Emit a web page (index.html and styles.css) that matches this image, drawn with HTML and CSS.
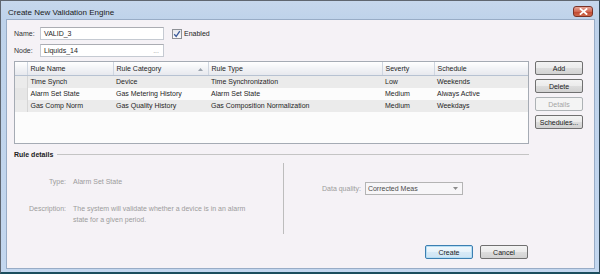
FILE: index.html
```html
<!DOCTYPE html>
<html>
<head>
	<title>Create New Validation Engine</title>
	<link rel="stylesheet" href="styles.css">
</head>
<body>
	<div class="window">
		<div class="titlebar">
			<span class="title">Create New Validation Engine</span>
			<button class="close-btn">
				<svg width="9" height="7" viewBox="0 0 9 7">
					<path d="M1.5 1 L7.5 6 M7.5 1 L1.5 6" stroke="#fff" stroke-width="1.8" stroke-linecap="square"/>
				</svg>
			</button>
		</div>

		<div class="client">
			<div class="field-row">
				<span class="field-label">Name:</span>
				<div class="textbox">VALID_3</div>
				<label class="check">
					<span class="checkbox">
						<svg width="8" height="8" viewBox="0 0 8 8">
							<path d="M1.2 4.2 L3.2 6.4 L6.8 1.2" fill="none" stroke="#3a5a9a" stroke-width="1.3"/>
						</svg>
					</span>
					Enabled
				</label>
			</div>
			<div class="field-row">
				<span class="field-label">Node:</span>
				<div class="textbox">Liquids_14<span class="browse">...</span></div>
			</div>

			<div class="rules">
				<div class="grid">
					<table>
						<colgroup>
							<col style="width:12px">
							<col style="width:86px">
							<col style="width:95px">
							<col style="width:174px">
							<col style="width:52px">
							<col style="width:94px">
						</colgroup>
						<tr>
							<th class="row-head"></th>
							<th>Rule Name</th>
							<th>Rule Category<span class="sort"><svg width="5" height="3" viewBox="0 0 5 3"><path d="M0 3 L2.5 0 L5 3 Z" fill="#9aa3ad"/></svg></span></th>
							<th>Rule Type</th>
							<th>Severty</th>
							<th>Schedule</th>
						</tr>
						<tr class="shade">
							<td class="row-head"></td>
							<td>Time Synch</td>
							<td>Device</td>
							<td>Time Synchronization</td>
							<td>Low</td>
							<td>Weekends</td>
						</tr>
						<tr>
							<td class="row-head"></td>
							<td>Alarm Set State</td>
							<td>Gas Metering History</td>
							<td>Alarm Set State</td>
							<td>Medium</td>
							<td>Always Active</td>
						</tr>
						<tr class="shade">
							<td class="row-head"></td>
							<td>Gas Comp Norm</td>
							<td>Gas Quality History</td>
							<td>Gas Composition Normalization</td>
							<td>Medium</td>
							<td>Weekdays</td>
						</tr>
					</table>
				</div>
				<div class="side-buttons">
					<button class="btn">Add</button>
					<button class="btn">Delete</button>
					<button class="btn" disabled>Details</button>
					<button class="btn">Schedules...</button>
				</div>
			</div>

			<div class="group-title"><span>Rule details</span></div>

			<div class="details">
				<div class="details-left">
					<div class="detail-row">
						<span class="detail-label">Type:</span>
						<span class="detail-value">Alarm Set State</span>
					</div>
					<div class="detail-row desc">
						<span class="detail-label">Description:</span>
						<span class="detail-value">The system will validate whether a device is in an alarm state for a given period.</span>
					</div>
				</div>
				<div class="details-right">
					<span class="detail-label">Data quality:</span>
					<div class="combo">Corrected Meas
						<svg width="5" height="3" viewBox="0 0 5 3"><path d="M0 0 L5 0 L2.5 3 Z" fill="#8c8c8c"/></svg>
					</div>
				</div>
			</div>

			<div class="footer">
				<button class="btn default">Create</button>
				<button class="btn">Cancel</button>
			</div>
		</div>
	</div>
</body>
</html>
```

FILE: styles.css
```css
body {
	margin: 0;
	font-family: "Liberation Sans", Arial, sans-serif;
	font-size: 7px;
	color: #1e1e1e;
}

.window {
	width: 600px;
	height: 274px;
	box-sizing: border-box;
	border-top: 1px solid #5f6670;
	border-left: 1px solid #5f6670;
	border-right: 1px solid #2e4454;
	border-bottom: 2px solid #1b4e5e;
	background: linear-gradient(#c6d7ec, #bed2ea 20px, #c3d7ef);
	padding: 0 4px 3px 5px;
	display: flex;
	flex-direction: column;
}

.titlebar {
	height: 18px;
	box-sizing: border-box;
	padding: 4px 2px 0 2px;
	display: flex;
	align-items: center;
	justify-content: space-between;
}

.title {
	font-size: 8px;
	color: #1a1a1a;
}

.close-btn {
	width: 20px;
	height: 11px;
	padding: 0;
	border: 1px solid #7a3328;
	border-radius: 3px;
	background: linear-gradient(#e6a597, #d26a55 50%, #bf4530 51%, #cf6a4c);
	display: flex;
	align-items: center;
	justify-content: center;
	margin-top: -2px;
}

.client {
	flex: 1;
	border: 1px solid #98acc6;
	background: #f5f2f6;
	padding: 7px 0 0 7px;
}

.field-row {
	display: flex;
	align-items: center;
	height: 13px;
	margin-bottom: 4px;
}

.field-label {
	width: 26px;
	color: #333;
}

.textbox {
	width: 124px;
	height: 13px;
	box-sizing: border-box;
	border: 1px solid #c5cad2;
	border-top-color: #abadb3;
	background: #fff;
	padding-left: 3px;
	line-height: 11px;
	display: flex;
	justify-content: space-between;
}

.browse {
	color: #9a9a9a;
	padding-right: 4px;
}

.check {
	display: flex;
	align-items: center;
	margin-left: 8px;
	color: #222;
}

.checkbox {
	width: 10px;
	height: 10px;
	box-sizing: border-box;
	border: 1px solid #8e9196;
	background: linear-gradient(#e6e8ec, #fafafa);
	display: flex;
	align-items: center;
	justify-content: center;
	margin-right: 2px;
}

.rules {
	display: flex;
	margin-top: 2px;
}

.grid {
	width: 515px;
	height: 83px;
	box-sizing: border-box;
	border: 1px solid #a5abb4;
	background: #fcfcfc;
	overflow: hidden;
}

table {
	border-collapse: collapse;
	table-layout: fixed;
	width: 513px;
}

th {
	height: 13px;
	padding: 0 3px;
	line-height: 12px;
	font-weight: normal;
	text-align: left;
	background: linear-gradient(#ffffff, #f2f3f6 50%, #e7e9ee);
	border-right: 1px solid #cfd6e0;
	border-bottom: 1px solid #b7c2d2;
	white-space: nowrap;
	overflow: hidden;
}

td {
	height: 12px;
	padding: 0 3px;
	line-height: 12px;
	white-space: nowrap;
	overflow: hidden;
}

tr.shade td {
	background: #ebebeb;
}

td.row-head {
	background: #e6e6e6;
	border-right: 1px solid #d6d6d6;
}

.sort {
	float: right;
	margin-right: 2px;
	line-height: 11px;
}

.side-buttons {
	display: flex;
	flex-direction: column;
	gap: 4px;
	margin-left: 6px;
	width: 48px;
}

.btn {
	height: 14px;
	padding: 0;
	border: 1px solid #707070;
	border-radius: 2px;
	background: linear-gradient(#f3f3f3, #ebebeb 50%, #dddddd 51%, #d2d2d2);
	font-family: "Liberation Sans", Arial, sans-serif;
	font-size: 7px;
	color: #1a1a1a;
}

.btn:disabled {
	color: #a4a4a4;
	border-color: #adb2b5;
	background: #f4f4f4;
}

.btn.default {
	border-color: #3c7fb1;
	box-shadow: inset 0 0 0 1px #b6def4;
	background: linear-gradient(#f2f8fc, #e6f2fa 50%, #d7eaf7 51%, #cfe4f3);
}

.group-title {
	width: 515px;
	height: 10px;
	margin-top: 5px;
	display: flex;
	align-items: center;
	font-weight: bold;
	color: #222;
}

.group-title::after {
	content: "";
	flex: 1;
	border-top: 1px solid #c4c4c4;
	margin-left: 4px;
}

.details {
	display: flex;
	margin-top: 4px;
	height: 71px;
	color: #9c9c9c;
}

.details-left {
	width: 269px;
	border-right: 1px solid #bdbdbd;
	padding-top: 13px;
	box-sizing: content-box;
}

.detail-row {
	display: flex;
	line-height: 11px;
}

.detail-row.desc {
	margin-top: 16px;
}

.detail-row .detail-label {
	width: 52px;
	text-align: right;
	margin-right: 7px;
}

.detail-value {
	width: 185px;
}

.details-right {
	display: flex;
	align-items: center;
	height: 13px;
	padding: 19px 0 0 38px;
}

.details-right .detail-label {
	margin-right: 4px;
}

.combo {
	width: 98px;
	height: 13px;
	box-sizing: border-box;
	border: 1px solid #b4b4b4;
	background: #f7f6f8;
	color: #4a4a4a;
	padding: 0 4px 0 2px;
	line-height: 11px;
	display: flex;
	align-items: center;
	justify-content: space-between;
}

.footer {
	width: 514px;
	display: flex;
	justify-content: flex-end;
	gap: 7px;
	margin-top: 11px;
}

.footer .btn {
	width: 48px;
}
```
